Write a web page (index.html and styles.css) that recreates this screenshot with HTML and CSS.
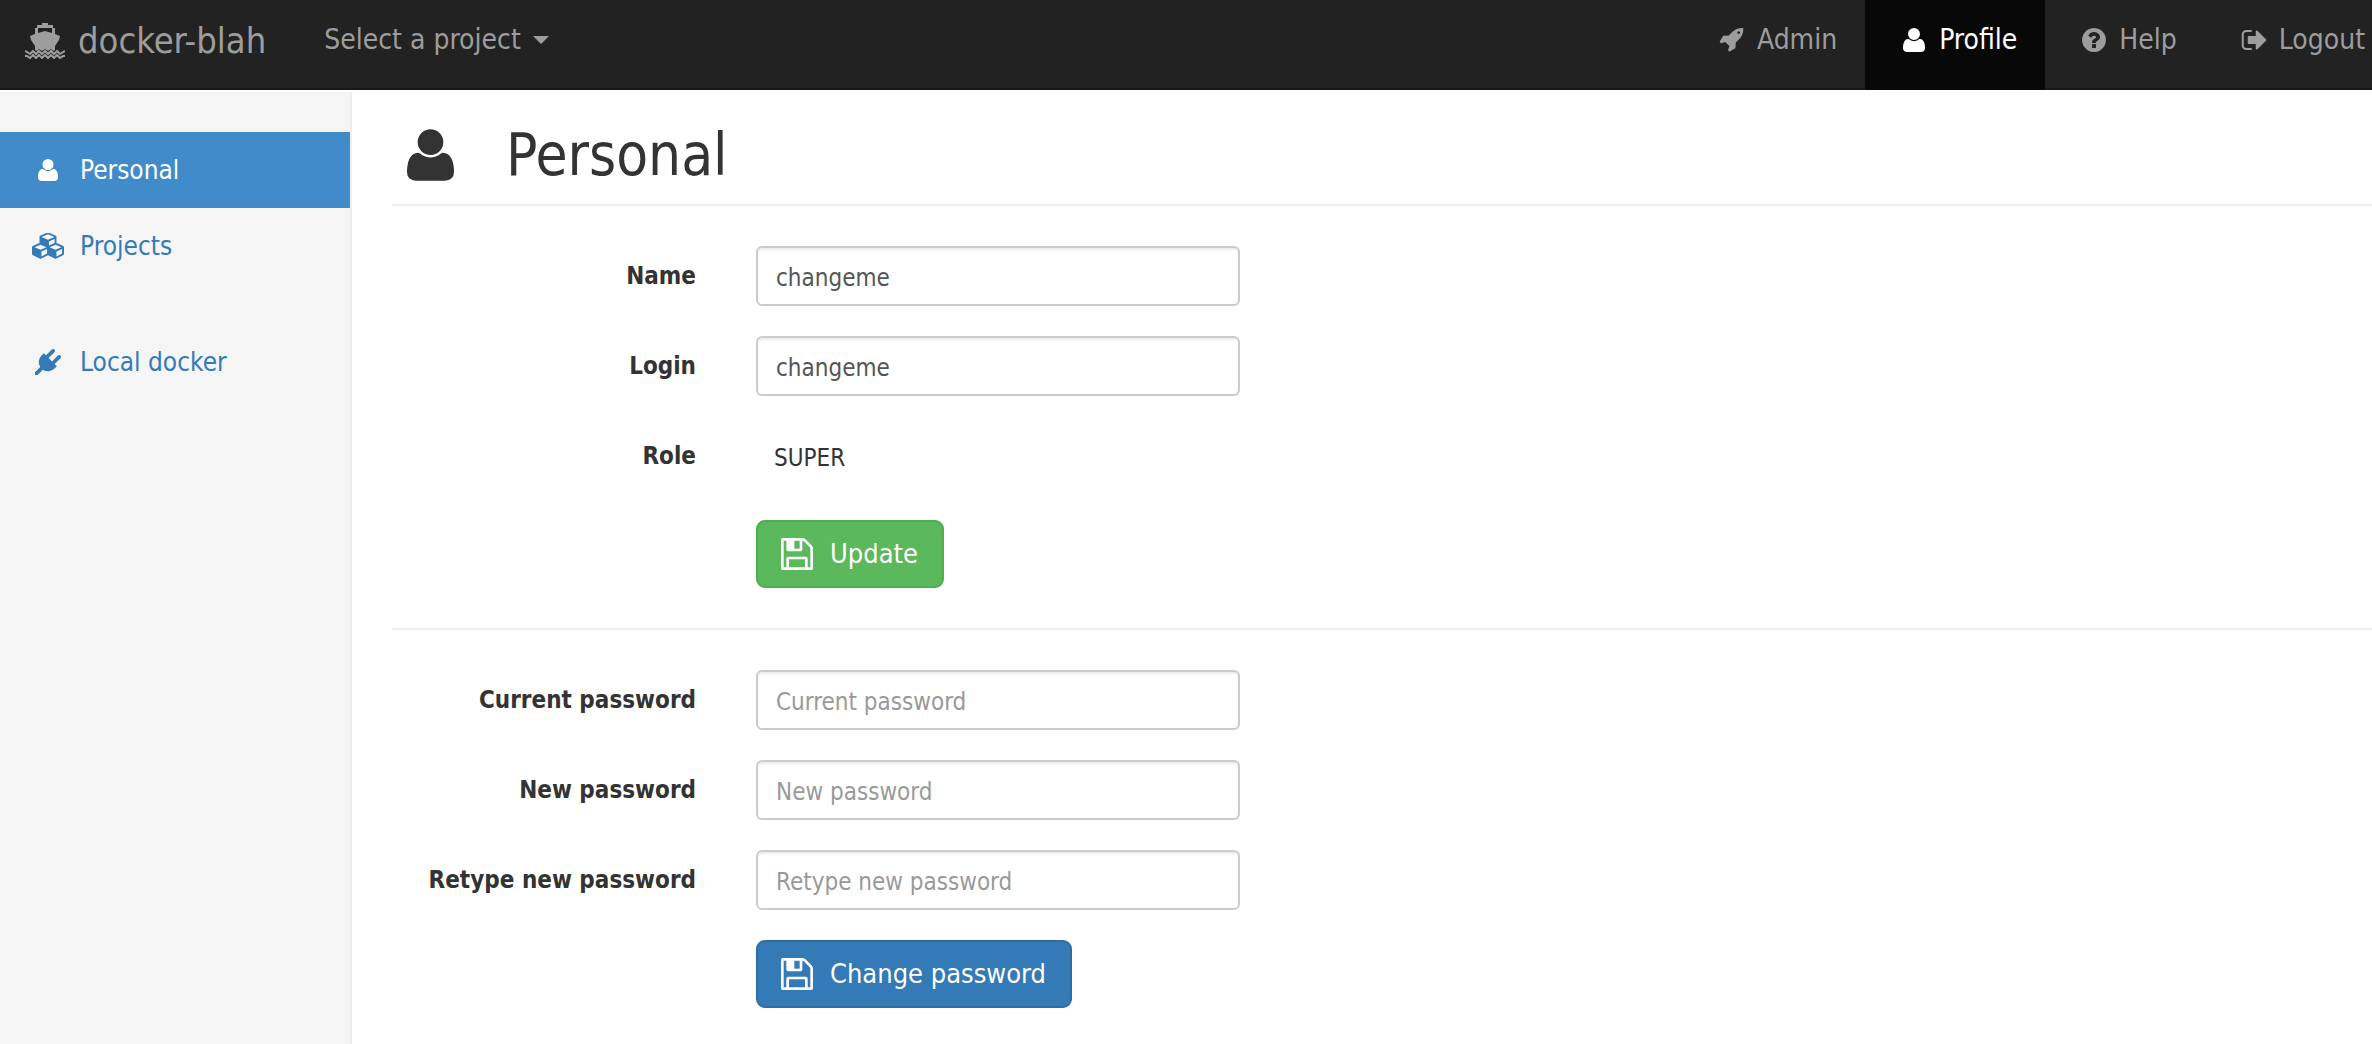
FILE: index.html
```html
<!DOCTYPE html>
<html lang="en">
<head>
<meta charset="utf-8">
<title>docker-blah</title>
<link rel="stylesheet" href="styles.css">
</head>
<body>
<svg class="sprite" aria-hidden="true">
  <symbol id="ship" viewBox="0 0 40 36">
    <path d="M17 0h6v2h5v3h2v6l5 2-1 4-4 6v4l-2 1-2-2-3 2-3-2-3 2-3-2-2 2-2-1v-4l-4-6-1-4 5-2V5h2V2h5zM13 5v5l7-2 7 2V5z"/>
    <path d="M0 28l2 1 3 2 3-3 3 3 3-3 3 3 3-3 3 3 3-3 3 3 3-3 3 3 3-2 2-1M0 33l2 0 3 2 3-3 3 3 3-3 3 3 3-3 3 3 3-3 3 3 3-3 3 3 3-2 2 0" fill="none" stroke="currentColor" stroke-width="2"/>
  </symbol>
  <symbol id="user" viewBox="0 -1408 1408 1536"><path transform="scale(1 -1)" d="M1408 131q0-120-73-189.500t-194-69.500h-874q-121 0-194 69.500t-73 189.500q0 53 3.500 103.500t14 109 26.500 108.500 43 97.500 62 81 85.500 53.500 111.500 20q9 0 42-21.500t74.500-48 108-48 133.500-21.500 133.500 21.500 108 48 74.500 48 42 21.500q61 0 111.500-20t85.500-53.500 62-81 43-97.500 26.500-108.500 14-109 3.500-103.500zM1088 1024q0-159-112.500-271.500t-271.500-112.500-271.500 112.500-112.500 271.500 112.500 271.500 271.500 112.500 271.500-112.500 112.500-271.500z"/></symbol>
  <symbol id="rocket" viewBox="96 128 1568 1664"><path d="M1440 448q0-40-28-68t-68-28-68 28-28 68 28 68 68 28 68-28 28-68zm224-288q0 249-75.500 430.500t-253.500 360.500q-81 80-195 176l-20 379q-2 16-16 26l-384 224q-7 4-16 4-12 0-23-9l-64-64q-13-14-8-32l85-276-281-281-276 85q-3 1-9 1-14 0-23-9l-64-64q-17-19-5-39l224-384q10-14 26-16l379-20q96-114 176-195 188-187 358-258t431-71q14 0 24 9.500t10 22.500z"/></symbol>
  <symbol id="help" viewBox="128 128 1536 1536"><path d="M1024 1376v-192q0-14-9-23t-23-9h-192q-14 0-23 9t-9 23v192q0 14 9 23t23 9h192q14 0 23-9t9-23zm256-672q0-88-55.500-163t-138.500-116-170-41q-243 0-371 213-15 24 8 42l132 100q7 6 19 6 16 0 25-12 53-68 86-92 34-24 86-24 48 0 85.500 26t37.500 59q0 38-20 61t-68 45q-63 28-115.500 86.500t-52.500 125.500v36q0 14 9 23t23 9h192q14 0 23-9t9-23q0-19 21.500-49.500t54.500-49.500q32-18 49-28.500t46-35 44.500-48 28-60.500 12.500-81zm384 192q0 209-103 385.500t-279.500 279.500-385.500 103-385.500-103-279.500-279.500-103-385.500 103-385.500 279.500-279.500 385.500-103 385.500 103 279.500 279.500 103 385.500z"/></symbol>
  <symbol id="signout" viewBox="64 128 1568 1536"><path d="M704 1440q0 4 1 20t.5 26.500-3 23.500-10 19.500-20.500 6.500h-320q-119 0-203.500-84.500t-84.500-203.500v-704q0-119 84.500-203.500t203.500-84.500h320q13 0 22.500 9.500t9.500 22.500q0 4 1 20t.5 26.500-3 23.500-10 19.500-20.500 6.500h-320q-66 0-113 47t-47 113v704q0 66 47 113t113 47h312l11.500 1 11.500 3 8 5.500 7 9 2 13.500zm928-544q0 26-19 45l-544 544q-19 19-45 19t-45-19-19-45v-288h-448q-26 0-45-19t-19-45v-384q0-26 19-45t45-19h448v-288q0-26 19-45t45-19 45 19l544 544q19 19 19 45z"/></symbol>
  <symbol id="cubes" viewBox="0 54 2176 1740"><path d="M640 1632l384-192v-314l-384 164v342zm-64-454l404-173-404-173-404 173zm1088 454l384-192v-314l-384 164v342zm-64-454l404-173-404-173-404 173zm-448-293l384-165v-266l-384 164v267zm-64-379l441-189-441-189-441 189zm1088 518v416q0 36-19 67t-52 47l-448 224q-25 14-57 14t-57-14l-448-224q-4-2-7-4-2 2-7 4l-448 224q-25 14-57 14t-57-14l-448-224q-33-16-52-47t-19-67v-416q0-38 21.500-70t56.500-48l434-186v-400q0-38 21.500-70t56.500-48l448-192q23-10 50-10t50 10l448 192q35 16 56.500 48t21.500 70v400l434 186q36 16 57 48t21 70z"/></symbol>
  <symbol id="plug" viewBox="0 0 1792 1792"><path d="M1755 453q37 38 37 90.500t-37 90.500l-401 400 150 150-160 160q-163 163-389.500 186.500t-411.500-100.500l-362 362h-181v-181l362-362q-124-185-100.500-411.500t186.500-389.500l160-160 150 150 400-401q38-37 91-37t90 37 37 90.500-37 90.500l-400 401 234 234 401-400q38-37 91-37t90 37z"/></symbol>
  <symbol id="save" viewBox="128 128 1536 1536"><path d="M512 1536h768v-384h-768v384zm896 0h128v-896q0-14-10-38.500t-20-34.500l-281-281q-10-10-34-20t-39-10v416q0 40-28 68t-68 28h-576q-40 0-68-28t-28-68v-416h-128v1280h128v-416q0-40 28-68t68-28h832q40 0 68 28t28 68v416zm-384-928v-320q0-13-9.500-22.500t-22.500-9.500h-192q-13 0-22.500 9.500t-9.500 22.500v320q0 13 9.500 22.500t22.500 9.500h192q13 0 22.500-9.500t9.500-22.500zm640 32v928q0 40-28 68t-68 28h-1344q-40 0-68-28t-28-68v-1344q0-40 28-68t68-28h928q40 0 88 20t76 48l280 280q28 28 48 76t20 88z"/></symbol>
</svg>

<header class="navbar">
  <a class="brand" href="#"><svg class="icon-brand"><use href="#ship"/></svg>docker-blah</a>
  <button class="project-menu" type="button">Select a project<span class="caret"></span></button>
  <nav class="nav-right">
    <a class="nav-link" href="#"><svg class="icon-nav"><use href="#rocket"/></svg>Admin</a>
    <a class="nav-link active" href="#"><svg class="icon-nav"><use href="#user"/></svg>Profile</a>
    <a class="nav-link" href="#"><svg class="icon-nav"><use href="#help"/></svg>Help</a>
    <a class="nav-link" href="#"><svg class="icon-nav"><use href="#signout"/></svg>Logout</a>
  </nav>
</header>

<div class="layout">
  <aside class="sidebar">
    <nav class="side-group">
      <a class="side-link active" href="#"><svg class="icon-side small"><use href="#user"/></svg>Personal</a>
      <a class="side-link" href="#"><svg class="icon-side"><use href="#cubes"/></svg>Projects</a>
    </nav>
    <nav class="side-group">
      <a class="side-link" href="#"><svg class="icon-side"><use href="#plug"/></svg>Local docker</a>
    </nav>
  </aside>

  <main class="content">
    <h1 class="page-title"><svg class="icon-title"><use href="#user"/></svg>Personal</h1>

    <form class="form">
      <label class="label" for="name">Name</label>
      <input class="field" id="name" type="text" value="changeme">
      <label class="label" for="login">Login</label>
      <input class="field" id="login" type="text" value="changeme">
      <span class="label">Role</span>
      <span class="static">SUPER</span>
      <button class="btn btn-success" type="submit"><svg class="icon-btn"><use href="#save"/></svg>Update</button>
    </form>

    <form class="form">
      <label class="label" for="current">Current password</label>
      <input class="field" id="current" type="password" placeholder="Current password">
      <label class="label" for="new">New password</label>
      <input class="field" id="new" type="password" placeholder="New password">
      <label class="label" for="retype">Retype new password</label>
      <input class="field" id="retype" type="password" placeholder="Retype new password">
      <button class="btn btn-primary" type="submit"><svg class="icon-btn"><use href="#save"/></svg>Change password</button>
    </form>
  </main>
</div>
</body>
</html>
```

FILE: styles.css
```css
* {
  box-sizing: border-box;
}

body {
  margin: 0;
  min-height: 100vh;
  display: flex;
  flex-direction: column;
  gap: 2px;
  background: #fff;
  color: #333;
  font-family: "DejaVu Sans Condensed", Tahoma, "DejaVu Sans", sans-serif;
  font-size: 24px;
  line-height: 34px;
}

a {
  text-decoration: none;
}

svg {
  display: block;
  flex: none;
  fill: currentColor;
}

.sprite {
  position: absolute;
  width: 0;
  height: 0;
}

/* Top bar */
.navbar {
  display: flex;
  min-height: 90px;
  background: #222;
  border-bottom: 2px solid #1a161a;
  color: #9d9d9d;
  font-size: 28px;
}

.brand {
  display: flex;
  align-items: center;
  gap: 13px;
  padding: 0 28px 6px 25px;
  color: inherit;
  font-size: 36px;
}

.icon-brand {
  width: 40px;
  height: 36px;
}

.project-menu {
  display: flex;
  align-items: center;
  gap: 12px;
  padding: 0 30px 8px;
  border: 0;
  background: none;
  color: inherit;
  font: inherit;
}

.caret {
  border: 8px solid transparent;
  border-top-color: currentColor;
  border-bottom: 0;
}

.nav-right {
  display: flex;
  margin-left: auto;
}

.nav-link {
  display: flex;
  align-items: center;
  gap: 12px;
  padding: 0 28px 8px 36px;
  color: inherit;
}

.nav-link:last-child {
  padding-right: 7px;
}

.nav-link.active {
  margin-bottom: -2px;
  padding-bottom: 10px;
  background: #080808;
  color: #fff;
}

.icon-nav {
  width: 26px;
  height: 24px;
}

/* Side navigation */
.layout {
  flex: 1;
  display: flex;
}

.sidebar {
  flex: none;
  width: 352px;
  display: flex;
  flex-direction: column;
  gap: 40px;
  padding-top: 40px;
  background: #f5f5f5;
  border-right: 2px solid #eee;
}

.side-link {
  display: flex;
  align-items: center;
  gap: 16px;
  height: 76px;
  padding-left: 32px;
  color: #337ab7;
  font-size: 26px;
}

.side-link.active {
  background: #428bca;
  color: #fff;
}

.icon-side {
  width: 32px;
  height: 26px;
}

.icon-side.small {
  height: 22px;
}

/* Page content */
.content {
  flex: 1;
  padding: 24px 0 0 40px;
}

.page-title {
  display: flex;
  align-items: center;
  gap: 52px;
  margin: 0;
  height: 90px;
  padding: 0 0 10px 15px;
  border-bottom: 2px solid #eee;
  font-size: 58px;
  font-weight: 400;
}

.icon-title {
  width: 47px;
  height: 52px;
}

.form {
  display: grid;
  grid-template-columns: 304px 484px;
  column-gap: 60px;
  row-gap: 30px;
  padding: 40px 0;
}

.form + .form {
  border-top: 2px solid #eee;
}

.label {
  padding-top: 13px;
  font-size: 24px;
  font-weight: 700;
  text-align: right;
}

.field {
  height: 60px;
  padding: 4px 18px 0;
  border: 2px solid #ccc;
  border-radius: 6px;
  background: #fff;
  box-shadow: inset 0 2px 2px rgba(0, 0, 0, .075);
  color: #555;
  font: inherit;
}

.field::placeholder {
  color: #999;
  opacity: 1;
}

.static {
  height: 64px;
  padding: 15px 18px;
}

.btn {
  grid-column: 2;
  justify-self: start;
  display: flex;
  align-items: center;
  gap: 17px;
  height: 68px;
  padding: 0 24px 0 23px;
  border: 2px solid;
  border-radius: 9px;
  color: #fff;
  font: inherit;
  font-size: 27px;
}

.btn-success {
  background: #5cb85c;
  border-color: #4cae4c;
}

.btn-primary {
  background: #337ab7;
  border-color: #2e6da4;
}

.icon-btn {
  width: 32px;
  height: 32px;
}
```
